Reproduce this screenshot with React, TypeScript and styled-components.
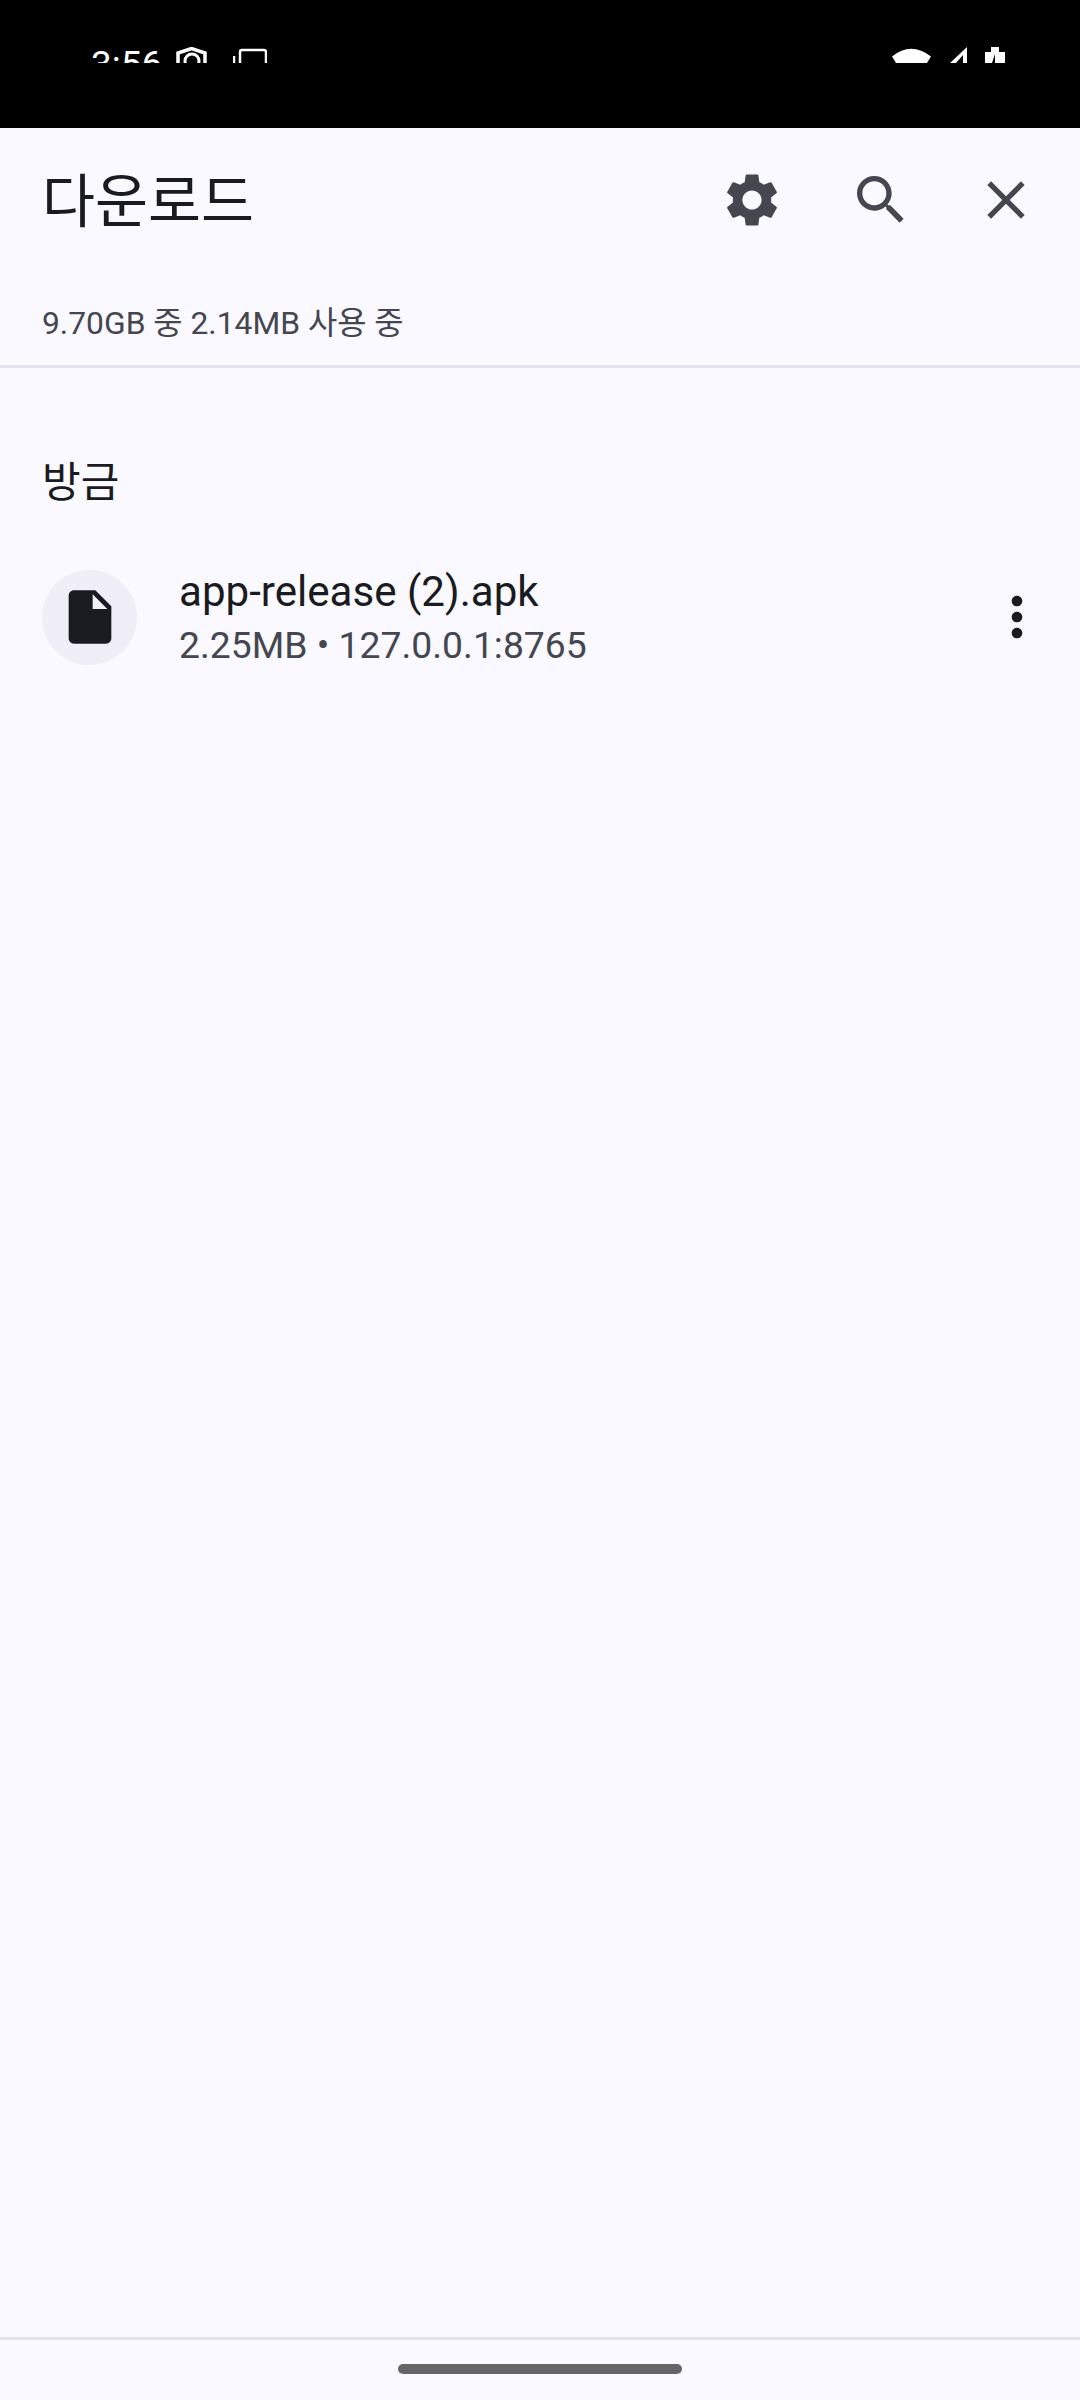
import React from 'react';
import styled, { createGlobalStyle } from 'styled-components';

const GlobalStyle = createGlobalStyle`
  html, body {
    margin: 0;
    padding: 0;
    background: #F9F9FF;
  }
  * {
    box-sizing: border-box;
  }
`;

const Screen = styled.div`
  width: 1080px;
  height: 2400px;
  display: flex;
  flex-direction: column;
  overflow: hidden;
  background: #F9F9FF;
  font-family: Roboto, "Noto Sans CJK KR", sans-serif;
  color: #1A1B20;
`;

const StatusArea = styled.div`
  height: 128px;
  flex: none;
  background: #000;
`;

/* the status icons are cut off at y=63 in the picture */
const StatusClip = styled.div`
  height: 63px;
  overflow: hidden;
  display: flex;
  justify-content: space-between;
  padding: 47px 75px 0 91px;
`;

const StatusGroup = styled.div`
  display: flex;
  align-items: flex-start;
`;

const Time = styled.span`
  font-size: 37px;
  line-height: 36px;
  color: #fff;
  margin-right: 15px;
  width: 70px;
`;

const StatusIcon = styled.svg<{ $gap?: number }>`
  display: block;
  flex: none;
  margin-right: ${({ $gap }) => $gap ?? 0}px;
`;

const Header = styled.header`
  flex: none;
  height: 240px;
  border-bottom: 3px solid #E2E2EC;
  display: flex;
  flex-direction: column;
`;

const TitleRow = styled.div`
  height: 144px;
  display: flex;
  align-items: center;
  padding: 0 42px 0 42px;
`;

const Title = styled.h1`
  flex: 1;
  margin: 0;
  padding-top: 5px;
  font-size: 57.6px;
  font-weight: 400;
  line-height: 64px;
  color: #1A1B20;
`;

const ActionIcon = styled.svg<{ $gap?: number }>`
  display: block;
  width: 64px;
  height: 64px;
  fill: #45464F;
  margin-left: ${({ $gap }) => $gap ?? 0}px;
`;

const Usage = styled.div`
  padding-left: 42px;
  margin-top: 31px;
  font-size: 31.8px;
  line-height: 40px;
  color: #45464F;
`;

const Content = styled.main`
  flex: 1;
  padding-top: 90px;
`;

const SectionLabel = styled.h2`
  margin: 0;
  padding-left: 42px;
  font-size: 42px;
  font-weight: 400;
  line-height: 50px;
  color: #1A1B20;
`;

const FileRow = styled.div`
  display: flex;
  align-items: center;
  margin-top: 59px;
  padding: 0 31px 0 42px;
`;

const FileBadge = styled.div`
  width: 95px;
  height: 95px;
  flex: none;
  border-radius: 50%;
  background: #F0EFF8;
  display: flex;
  align-items: center;
  justify-content: center;
`;

const FileIcon = styled.svg`
  display: block;
  width: 64px;
  height: 64px;
  fill: #1A1B20;
`;

const FileText = styled.div`
  flex: 1;
  min-width: 0;
  margin-left: 42px;
`;

const FileName = styled.div`
  font-size: 42.1px;
  line-height: 50px;
  color: #1A1B20;
`;

const FileMeta = styled.div`
  font-size: 37.3px;
  line-height: 44px;
  margin-top: 6px;
  color: #45464F;
`;

const MoreIcon = styled.svg`
  display: block;
  width: 64px;
  height: 64px;
  fill: #1A1B20;
`;

const NavBar = styled.footer`
  flex: none;
  height: 63px;
  border-top: 3px solid #E2E2EC;
  display: flex;
  justify-content: center;
  padding-top: 24px;
`;

const HomePill = styled.div`
  width: 284px;
  height: 10px;
  border-radius: 5px;
  background: #666;
`;

const App: React.FC = () => {
    return (
        <>
            <GlobalStyle />
            <Screen>
                <StatusArea>
                    <StatusClip>
                        <StatusGroup>
                            <Time>3:56</Time>
                            <StatusIcon width="31" height="34" viewBox="0 0 31 34" $gap={26}>
                                <path d="M15.5 1.5 L29 6 V24 C29 29 23 32 15.5 33 C8 32 2 29 2 24 V6 Z" fill="none" stroke="#fff" strokeWidth="3.5" />
                                <circle cx="16" cy="14" r="7" fill="none" stroke="#fff" strokeWidth="3" />
                            </StatusIcon>
                            <StatusIcon width="34" height="34" viewBox="0 0 34 34">
                                <path d="M1 9 V34" fill="none" stroke="#fff" strokeWidth="2.5" />
                                <path d="M7 34 V5 Q7 3 9 3 H31 Q33 3 33 5 V34" fill="none" stroke="#fff" strokeWidth="2.5" />
                            </StatusIcon>
                        </StatusGroup>
                        <StatusGroup>
                            <StatusIcon width="40" height="34" viewBox="0 0 40 34" $gap={18}>
                                <path d="M0 9.5 Q19 -6 39 9.5 L30 24 H9 Z" fill="#fff" />
                            </StatusIcon>
                            <StatusIcon width="18" height="34" viewBox="0 0 18 34" $gap={17}>
                                <path d="M0 16 L17 0 V16 H13 V8 L6 16 Z" fill="#fff" />
                            </StatusIcon>
                            <StatusIcon width="20" height="34" viewBox="0 0 20 34">
                                <path d="M0 5 H6 V0 H14 V5 H20 V34 H0 Z" fill="#fff" />
                                <path d="M10 7 L7 16 H10 Z" fill="#000" />
                            </StatusIcon>
                        </StatusGroup>
                    </StatusClip>
                </StatusArea>

                <Header>
                    <TitleRow>
                        <Title>다운로드</Title>
                        <ActionIcon viewBox="0 0 24 24">
                            <path d="M19.14 12.94c.04-.3.06-.61.06-.94 0-.32-.02-.64-.07-.94l2.03-1.58c.18-.14.23-.41.12-.61l-1.92-3.32c-.12-.22-.37-.29-.59-.22l-2.39.96c-.5-.38-1.03-.7-1.62-.94l-.36-2.54c-.04-.24-.24-.41-.48-.41h-3.84c-.24 0-.43.17-.47.41l-.36 2.54c-.59.24-1.13.57-1.62.94l-2.39-.96c-.22-.08-.47 0-.59.22L2.74 8.87c-.12.21-.08.47.12.61l2.03 1.58c-.05.3-.09.63-.09.94s.02.64.07.94l-2.03 1.58c-.18.14-.23.41-.12.61l1.92 3.32c.12.22.37.29.59.22l2.39-.96c.5.38 1.03.7 1.62.94l.36 2.54c.05.24.24.41.48.41h3.84c.24 0 .44-.17.47-.41l.36-2.54c.59-.24 1.13-.56 1.62-.94l2.39.96c.22.08.47 0 .59-.22l1.92-3.32c.12-.22.07-.47-.12-.61l-2.01-1.58zM12 15.6c-1.98 0-3.6-1.62-3.6-3.6s1.62-3.6 3.6-3.6 3.6 1.62 3.6 3.6-1.62 3.6-3.6 3.6z" />
                        </ActionIcon>
                        <ActionIcon viewBox="0 0 24 24" $gap={65}>
                            <path d="M15.5 14h-.79l-.28-.27C15.41 12.59 16 11.11 16 9.5 16 5.91 13.09 3 9.5 3S3 5.91 3 9.5 5.91 16 9.5 16c1.61 0 3.09-.59 4.23-1.57l.27.28v.79l5 4.99L20.49 19l-4.99-5zm-6 0C7.01 14 5 11.99 5 9.5S7.01 5 9.5 5 14 7.01 14 9.5 11.99 14 9.5 14z" />
                        </ActionIcon>
                        <ActionIcon viewBox="0 0 24 24" $gap={61}>
                            <path d="M19 6.41 17.59 5 12 10.59 6.41 5 5 6.41 10.59 12 5 17.59 6.41 19 12 13.41 17.59 19 19 17.59 13.41 12z" />
                        </ActionIcon>
                    </TitleRow>
                    <Usage>9.70GB 중 2.14MB 사용 중</Usage>
                </Header>

                <Content>
                    <SectionLabel>방금</SectionLabel>
                    <FileRow>
                        <FileBadge>
                            <FileIcon viewBox="0 0 24 24">
                                <path d="M6 2c-1.1 0-2 .9-2 2v16c0 1.1.9 2 2 2h12c1.1 0 2-.9 2-2V8l-6-6H6zm7 7V3.5L18.5 9H13z" />
                            </FileIcon>
                        </FileBadge>
                        <FileText>
                            <FileName>app-release (2).apk</FileName>
                            <FileMeta>2.25MB • 127.0.0.1:8765</FileMeta>
                        </FileText>
                        <MoreIcon viewBox="0 0 24 24">
                            <path d="M12 8c1.1 0 2-.9 2-2s-.9-2-2-2-2 .9-2 2 .9 2 2 2zm0 2c-1.1 0-2 .9-2 2s.9 2 2 2 2-.9 2-2-.9-2-2-2zm0 6c-1.1 0-2 .9-2 2s.9 2 2 2 2-.9 2-2-.9-2-2-2z" />
                        </MoreIcon>
                    </FileRow>
                </Content>

                <NavBar>
                    <HomePill />
                </NavBar>
            </Screen>
        </>
    );
};

export default App;
